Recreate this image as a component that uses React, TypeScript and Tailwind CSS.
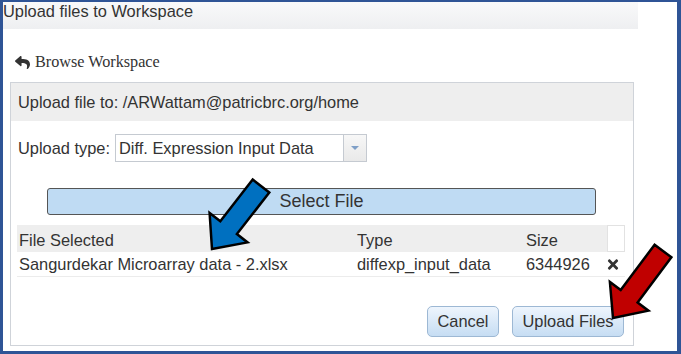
import React from "react";
import { FaReply, FaTimes } from "react-icons/fa";

function arrowPoints(
  sx: number,
  sy: number,
  tx: number,
  ty: number,
  sh: number,
  hh: number,
  hl: number
): string {
  const dx = tx - sx;
  const dy = ty - sy;
  const L = Math.hypot(dx, dy);
  const ux = dx / L;
  const uy = dy / L;
  const px = -uy;
  const py = ux;
  const bx = tx - ux * hl;
  const by = ty - uy * hl;
  const pts = [
    [sx + px * sh, sy + py * sh],
    [bx + px * sh, by + py * sh],
    [bx + px * hh, by + py * hh],
    [tx, ty],
    [bx - px * hh, by - py * hh],
    [bx - px * sh, by - py * sh],
    [sx - px * sh, sy - py * sh],
  ];
  return pts.map((p) => `${p[0].toFixed(1)},${p[1].toFixed(1)}`).join(" ");
}

export default function App() {
  return (
    <div className="relative w-[681px] h-[354px] overflow-hidden">
      <div className="w-[681px] h-[354px] bg-white border-solid border-[#2f5496] border-l-[3px] border-t-2 border-r-4 border-b-[3px] font-['Liberation_Sans',Arial,sans-serif] text-[#333]">
        {/* Title bar */}
        <div className="w-[635px] h-[27px] bg-gradient-to-b from-[#f9f9fa] to-[#eeeff1] text-[16.4px] leading-[18px]">
          Upload files to Workspace
        </div>

        {/* Browse workspace */}
        <div className="mt-[24px] pl-[11px] h-[18px] flex items-center gap-[4px]">
          <FaReply className="w-[17px] h-[15px] text-[#333]" />
          <span className="font-['Liberation_Serif',serif] text-[16.2px] leading-[18px] text-[#333]">
            Browse Workspace
          </span>
        </div>

        {/* Panel */}
        <div className="mt-[11px] ml-[7px] w-[624px] h-[264px] border border-[#cfd3d9] flex flex-col">
          <div className="h-[38px] bg-[#eeeeee] flex items-center pl-[7px] text-[16.4px]">
            Upload file to: /ARWattam@patricbrc.org/home
          </div>

          {/* Upload type */}
          <div className="mt-[13px] pl-[7px] flex items-center gap-[5px] text-[16.4px]">
            <span>Upload type:</span>
            <div className="w-[252px] h-[28px] border border-[#c5cad1] flex">
              <div className="flex-1 flex items-center pl-[3px]">Diff. Expression Input Data</div>
              <div className="w-[23px] border-l border-[#c5cad1] bg-gradient-to-b from-[#f7f7f7] to-[#e9e9e9] flex items-center justify-center">
                <div className="w-0 h-0 border-l-[4px] border-r-[4px] border-t-[4px] border-l-transparent border-r-transparent border-t-[#7f9fc7]" />
              </div>
            </div>
          </div>

          {/* Select file button */}
          <div className="mt-[26px] ml-[36px] w-[549px] h-[27px] bg-[#bfdbf3] border border-[#555] rounded-[3px] flex items-center justify-center text-[18px]">
            Select File
          </div>

          {/* Table */}
          <div className="mt-[10px] ml-[6px] w-[608px] text-[16.4px]">
            <div className="h-[27px] flex">
              <div className="w-[590px] bg-[#eeeeee] flex items-center pt-[3px]">
                <div className="w-[338px] pl-[2px]">File Selected</div>
                <div className="w-[170px] pl-[2px]">Type</div>
                <div className="pl-[1px]">Size</div>
              </div>
              <div className="flex-1 border border-[#e2e2e2] bg-white" />
            </div>
            <div className="h-[25px] flex items-center border-b border-[#ececec]">
              <div className="w-[338px] pl-[2px]">Sangurdekar Microarray data - 2.xlsx</div>
              <div className="w-[170px] pl-[2px]">diffexp_input_data</div>
              <div className="w-[81px] pl-[1px]">6344926</div>
              <FaTimes className="w-[14px] h-[15px] text-[#333]" />
            </div>
          </div>

          {/* Buttons */}
          <div className="mt-[29px] pr-[9px] flex justify-end gap-[13px] text-[16.4px]">
            <div className="w-[72px] h-[31px] rounded-[5px] border border-[#9db8d4] bg-gradient-to-b from-[#eef5fd] to-[#c6ddf3] flex items-center justify-center">
              Cancel
            </div>
            <div className="w-[112px] h-[31px] rounded-[5px] border border-[#9db8d4] bg-gradient-to-b from-[#eef5fd] to-[#c6ddf3] flex items-center justify-center">
              Upload Files
            </div>
          </div>
        </div>
      </div>

      {/* Callout arrows */}
      <svg
        className="absolute top-0 left-0 pointer-events-none"
        width="681"
        height="354"
        viewBox="0 0 681 354"
      >
        <polygon
          points={arrowPoints(261, 186, 212, 249, 10.5, 24, 27)}
          fill="#0070c0"
          stroke="#000"
          strokeWidth="2.5"
          strokeLinejoin="miter"
        />
        <polygon
          points={arrowPoints(663, 251, 613, 318, 10.5, 24, 27)}
          fill="#c00000"
          stroke="#000"
          strokeWidth="2.5"
          strokeLinejoin="miter"
        />
      </svg>
    </div>
  );
}
